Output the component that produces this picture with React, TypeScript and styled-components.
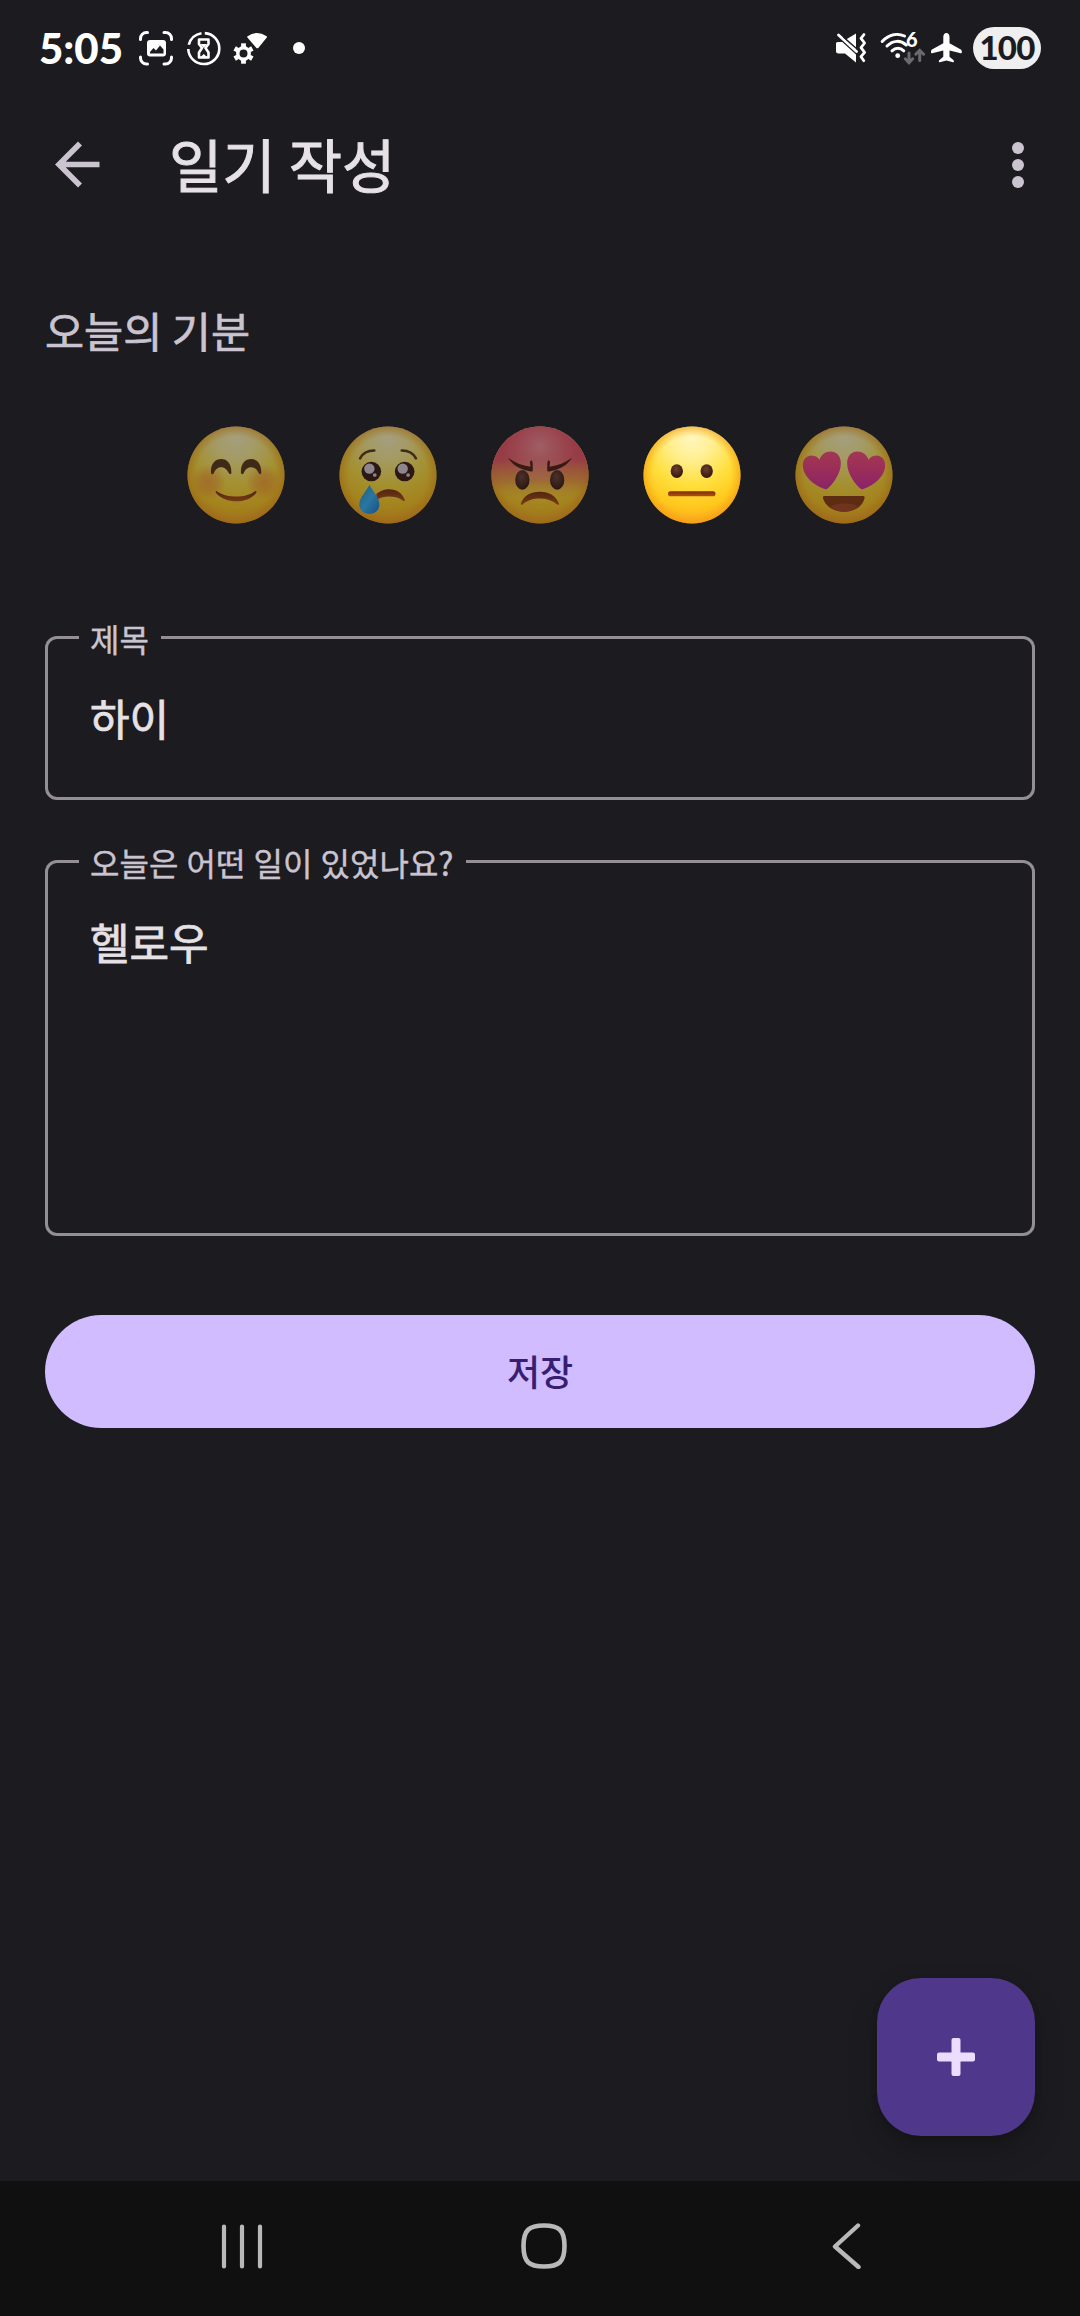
import React from "react";
import styled, { createGlobalStyle } from "styled-components";

const hangul = `"Noto Sans CJK KR", "Noto Sans", sans-serif`;

const GlobalStyle = createGlobalStyle`
  *, *::before, *::after { box-sizing: border-box; }
  body { margin: 0; background: #1c1b1f; font-family: ${hangul}; }
`;

const Screen = styled.div`
  display: flex;
  flex-direction: column;
  width: 1080px;
  height: 2316px;
  overflow: hidden;
  background: #1c1b1f;
  color: #e6e1e5;
`;

const StatusBar = styled.header`
  display: flex;
  justify-content: space-between;
  height: 96px;
  padding: 0 39px 0 39px;
`;

const StatusGroup = styled.div`
  display: flex;
  align-items: center;
`;

const Clock = styled.time`
  width: 99px;
  font: 900 42px/48px Lato, sans-serif;
  letter-spacing: 0;
  color: #fff;
`;

const StatusIcon = styled.svg<{ $gap?: number }>`
  display: block;
  flex: none;
  margin-left: ${(p) => p.$gap ?? 0}px;
  overflow: visible;
`;

const MoreDot = styled.span`
  width: 12px;
  height: 12px;
  margin-left: 26px;
  border-radius: 50%;
  background: #fff;
`;

const WifiBand = styled.text`
  font: 900 20px Lato, sans-serif;
`;

const Battery = styled.span`
  display: flex;
  align-items: center;
  justify-content: center;
  width: 68px;
  height: 42px;
  margin-left: 9px;
  border-radius: 21px;
  background: #efeff0;
  color: #1c1b1f;
  font: 900 33px/40px Lato, sans-serif;
  letter-spacing: -0.8px;
  padding-bottom: 2px;
`;

const AppBar = styled.div`
  display: flex;
  align-items: center;
  height: 138px;
  padding: 0 56px 0 54px;
`;

const IconButton = styled.button`
  display: flex;
  padding: 0;
  border: 0;
  background: none;
  color: #cac4d0;
  cursor: pointer;
`;

const Title = styled.h1`
  flex: 1;
  margin: 0 0 0 67px;
  padding-bottom: 4px;
  font-size: 58px;
  font-weight: 400;
  line-height: 80px;
  -webkit-text-stroke: 1px currentColor;
`;

const Form = styled.main`
  display: flex;
  flex: 1;
  flex-direction: column;
  padding: 66px 45px 45px;
`;

const MoodLabel = styled.h2`
  margin: 0;
  font-size: 42.5px;
  font-weight: 400;
  line-height: 60px;
  color: #cac4d0;
  -webkit-text-stroke: 0.7px currentColor;
`;

const MoodRow = styled.div`
  display: flex;
  justify-content: center;
  gap: 54px;
  margin-top: 66px;
`;

const MoodButton = styled.button<{ $selected: boolean }>`
  width: 98px;
  height: 98px;
  padding: 0;
  border: 0;
  background: none;
  opacity: ${(p) => (p.$selected ? 1 : 0.6)};
  cursor: pointer;

  svg { display: block; }
`;

const Field = styled.fieldset<{ $height: number; $top: number }>`
  height: ${(p) => p.$height}px;
  margin: ${(p) => p.$top}px 0 0;
  padding: 0 43px 0 31px;
  border: 3px solid #938f94;
  border-radius: 12px;
`;

const FieldLabel = styled.legend`
  padding: 2px 12px 0 11px;
  font-size: 32px;
  line-height: 40px;
  word-spacing: 1px;
  color: #cac4d0;
  -webkit-text-stroke: 0.4px currentColor;
`;

const FieldValue = styled.div`
  padding: 29px 11px 0;
  font-size: 43px;
  line-height: 60px;
  -webkit-text-stroke: 0.8px currentColor;
`;

const SaveButton = styled.button`
  height: 113px;
  margin-top: 79px;
  padding: 0 0 4px;
  border: 0;
  border-radius: 57px;
  background: #d0bcff;
  color: #381e72;
  font: 500 36px/60px ${hangul};
  cursor: pointer;
`;

const AddButton = styled.button`
  display: grid;
  place-items: center;
  width: 158px;
  height: 158px;
  margin: auto 0 0 auto;
  padding: 0;
  border: 0;
  border-radius: 44px;
  background: #4f378b;
  box-shadow: 0 14px 30px rgba(0, 0, 0, 0.22), 0 2px 6px rgba(0, 0, 0, 0.16);
  cursor: pointer;
`;

const NavBar = styled.nav`
  display: flex;
  align-items: center;
  height: 135px;
  padding: 0 219px 6px 221px;
  background: #101010;
`;

const NavButton = styled(IconButton)<{ $gap?: number }>`
  margin-left: ${(p) => p.$gap ?? 0}px;
`;

const brown = "#5b3313";

function Face({ id, children, angry }: { id: string; children: React.ReactNode; angry?: boolean }) {
  return (
    <svg width="98" height="98" viewBox="0 0 100 100">
      <defs>
        <radialGradient id={`${id}-base`} cx="50%" cy="12%" r="96%">
          <stop offset="0" stopColor="#fff6bc" />
          <stop offset="0.22" stopColor="#fff094" />
          <stop offset="0.5" stopColor="#ffdf3c" />
          <stop offset="0.74" stopColor="#ffc81c" />
          <stop offset="1" stopColor="#f9961c" />
        </radialGradient>
        <radialGradient id={`${id}-rim`} cx="50%" cy="50%" r="50%">
          <stop offset="0.8" stopColor="#f7a81a" stopOpacity="0" />
          <stop offset="1" stopColor="#f39a14" stopOpacity="0.6" />
        </radialGradient>
        <linearGradient id={`${id}-red`} x1="0" y1="0" x2="0" y2="1">
          <stop offset="0" stopColor="#e8455c" />
          <stop offset="0.34" stopColor="#ea5560" />
          <stop offset="0.56" stopColor="#ee8442" stopOpacity="0.7" />
          <stop offset="0.74" stopColor="#f8b02c" stopOpacity="0" />
        </linearGradient>
        <radialGradient id={`${id}-shine`} cx="50%" cy="20%" r="40%">
          <stop offset="0" stopColor="#ffb8b8" stopOpacity="0.6" />
          <stop offset="1" stopColor="#ff9a9a" stopOpacity="0" />
        </radialGradient>
        <radialGradient id={`${id}-blush`}>
          <stop offset="0" stopColor="#f2602c" stopOpacity="0.42" />
          <stop offset="0.5" stopColor="#f2602c" stopOpacity="0.28" />
          <stop offset="1" stopColor="#f2642c" stopOpacity="0" />
        </radialGradient>
        <linearGradient id={`${id}-heart`} x1="0" y1="0" x2="0" y2="1">
          <stop offset="0" stopColor="#fb4c76" />
          <stop offset="0.5" stopColor="#ee3a80" />
          <stop offset="1" stopColor="#d22a9c" />
        </linearGradient>
        <linearGradient id={`${id}-tear`} x1="0" y1="0" x2="1" y2="1">
          <stop offset="0" stopColor="#1f86c8" />
          <stop offset="0.5" stopColor="#35b4f4" />
          <stop offset="1" stopColor="#1272d4" />
        </linearGradient>
        <linearGradient id={`${id}-mouth`} x1="0" y1="0" x2="0" y2="1">
          <stop offset="0" stopColor="#7a2c08" />
          <stop offset="1" stopColor="#b5500f" />
        </linearGradient>
        <radialGradient id={`${id}-eye`} cx="45%" cy="35%" r="65%">
          <stop offset="0" stopColor="#6b4030" />
          <stop offset="1" stopColor="#35160c" />
        </radialGradient>
      </defs>
      <circle cx="50" cy="50" r="49.5" fill={`url(#${id}-base)`} />
      <circle cx="50" cy="50" r="49.5" fill={`url(#${id}-rim)`} />
      {angry && <circle cx="50" cy="50" r="49.5" fill={`url(#${id}-red)`} />}
      {angry && <circle cx="50" cy="50" r="49.5" fill={`url(#${id}-shine)`} />}
      {children}
    </svg>
  );
}

const Smile = () => (
  <Face id="smile">
    <circle cx="22" cy="57" r="18" fill="url(#smile-blush)" />
    <circle cx="78" cy="57" r="18" fill="url(#smile-blush)" />
    <path d="M24.400 47C24.400 38 29 33.800 35 33.800s10.300 4.700 10.300 13.700c0 2.200-1.900 2.200-2.800.3C41 44.500 38.700 42 34.900 42s-6.100 2.600-7.500 6c-.9 2-3 1.500-3-1z" fill={brown} />
    <path d="M55 47C55 38 59.500 33.800 65.500 33.800s10.300 4.700 10.300 13.700c0 2.200-1.900 2.200-2.800.3C71.500 44.500 69.200 42 65.400 42s-6.100 2.600-7.500 6c-.9 2-2.900 1.500-2.900-1z" fill={brown} />
    <path d="M30.500 66.500c6 4.300 12.500 5.400 20 5.400s13.500-1.500 19-5.400c1.600-.8 1.900 1 .7 2.400-5 5.700-12 8-19.700 8-8.500 0-15.500-2.700-20.200-7.700-1.600-1.800-1.300-3.500.2-2.700z" fill="url(#smile-mouth)" />
  </Face>
);

const Cry = () => (
  <Face id="cry">
    <path d="M21.500 33C24 28 29 25 36 25" fill="none" stroke={brown} strokeWidth="2.600" strokeLinecap="round" />
    <path d="M78.500 33C76 28 71 25 64 25" fill="none" stroke={brown} strokeWidth="2.600" strokeLinecap="round" />
    <circle cx="33" cy="46.500" r="10" fill="#35160c" />
    <circle cx="67" cy="46.500" r="10" fill="#35160c" />
    <circle cx="31" cy="43.500" r="5.300" fill="#dccdd6" />
    <circle cx="65" cy="43.500" r="5.300" fill="#dccdd6" />
    <circle cx="36.500" cy="50" r="1.900" fill="#dccdd6" />
    <circle cx="70.500" cy="50" r="1.900" fill="#dccdd6" />
    <path d="M38 69.500C42 66 46 64.500 51 64.500c8 0 13.500 4 16 10.500.4 1.500-.8 2-2 1C61 73 56 72 51 72c-5 0-8.500 1-12 3z" fill="url(#cry-mouth)" />
    <path d="M31 60c3.500 6.500 10.200 13 10.200 20.200 0 5.600-4.400 9.500-10.200 9.500s-10.300-3.900-10.300-9.500C20.700 73 28 66.500 31 60z" fill="url(#cry-tear)" />
  </Face>
);

const Angry = () => (
  <Face id="angry" angry>
    <ellipse cx="32" cy="55" rx="7.300" ry="10" fill="url(#angry-eye)" />
    <ellipse cx="67.500" cy="55" rx="7.300" ry="10" fill="url(#angry-eye)" />
    <path d="M17.500 32.500C24 37.500 32 40.500 40.200 41.500L39.800 36.500q1.300-2.400 2.600 0L42.700 45q0 1.800-1.800 1.500C31 45 22 40.500 17.500 32.500z" fill="#4a1a10" />
    <path d="M82.500 32.500C76 37.500 68 40.500 59.800 41.500L60.200 36.500q-1.300-2.400-2.600 0L57.300 45q0 1.800 1.800 1.500C69 45 78 40.500 82.500 32.500z" fill="#4a1a10" />
    <path d="M30.500 79C33 71.500 40 67 49.700 67S66.500 71.500 69.300 79c.3 1.500-.8 1.700-2 .8C62.500 76 57 74 49.700 74s-12.500 2-17.200 5.800c-1.200.9-2.300.7-2-.8z" fill="url(#angry-mouth)" />
  </Face>
);

const Neutral = () => (
  <Face id="neutral">
    <ellipse cx="34.500" cy="46" rx="6.300" ry="7" fill="url(#neutral-eye)" />
    <ellipse cx="65" cy="46" rx="6.300" ry="7" fill="url(#neutral-eye)" />
    <rect x="25.500" y="66.500" width="48.500" height="5.300" rx="2.600" fill="url(#neutral-mouth)" />
  </Face>
);

const heart =
  "M30.500 64.300C22 61.500 8.500 53 8 40.500 7.800 33.500 12.500 30 17 30.200c4 .2 6.500 2 8 4.300C26.500 29.500 31 26 36.500 26c6.500 0 10.500 5.500 10.300 12.500C46.500 49 38 60.500 33 64c-.9.7-1.600.6-2.500.3z";

const Love = () => (
  <Face id="love">
    <path d={heart} fill="url(#love-heart)" />
    <path d={heart} fill="url(#love-heart)" transform="matrix(-1 0 0 1 100 0)" />
    <path d="M30 71.500h39.500q1.800 0 1.500 2C69 82 60.500 87.500 50 87.500S31 82 28.500 73.500q-.4-2 1.500-2z" fill="#8a360c" />
    <path d="M36 82.500C40 78 60 78 64.500 82 60 86 55.500 87.500 50 87.500s-10.500-1.600-14-5z" fill="#a8441c" />
  </Face>
);

const moods = [
  { key: "smile", Picture: Smile },
  { key: "cry", Picture: Cry },
  { key: "angry", Picture: Angry },
  { key: "neutral", Picture: Neutral },
  { key: "love", Picture: Love },
];

const CaptureIcon = () => (
  <StatusIcon width="36" height="36" viewBox="0 0 36 36" fill="none" stroke="#fff" strokeWidth="3" strokeLinecap="round">
    <path d="M2.500 9.500V8.500a6 6 0 0 1 6-6h1M26 2.500h1.500a6 6 0 0 1 6 6v1M33.500 27v1a6 6 0 0 1-6 6H26M9.500 34h-1a6 6 0 0 1-6-6v-1" />
    <rect x="9" y="10" width="19" height="16.500" rx="3" fill="#fff" stroke="none" />
    <path d="M12 23.500v-1.500l3.500-4 2.500 2.500 4-5 3.500 4v4z" fill="#1c1b1f" stroke="none" />
  </StatusIcon>
);

const TimerIcon = () => (
  <StatusIcon $gap={12} width="36" height="36" viewBox="0 0 36 36" fill="none" stroke="#fff" strokeWidth="2.600">
    <path d="M18.800 3.100a15.500 15.500 0 1 1-16.500 15.900M2.800 14.800A15.500 15.500 0 0 1 15.500 3.200" />
    <path d="M13 9.500h9.500v4.500l-3 4 3 4.500v5H13v-5l3-4.500-3-4z" strokeLinejoin="round" />
    <path d="M14.500 14h6.500L17.800 18zM14 27.500l3.800-3.500 3.800 3.500z" fill="#fff" stroke="none" />
  </StatusIcon>
);

const GearWifiIcon = () => (
  <StatusIcon $gap={12} width="33" height="36" viewBox="0 0 33 36">
    <g transform="translate(9.500 23.500)" stroke="#fff" fill="none">
      <circle r="5.700" strokeWidth="3.400" />
      {[0, 60, 120, 180, 240, 300].map((a) => (
        <path key={a} d="M0-6.500V-10.200" strokeWidth="4.800" transform={`rotate(${a})`} />
      ))}
    </g>
    <path d="M13.600 6.200Q23 -.400 32.600 6.200q.8.500.2 1.200L24.500 17.700q-1.200 1.200-2.300 0L13.400 7.400q-.6-.7.2-1.200z" fill="#fff" />
  </StatusIcon>
);

const MutedIcon = () => (
  <StatusIcon width="34" height="36" viewBox="0 0 34 36">
    <path d="M12.500 9.200L22 3.500v17z" fill="#fff" />
    <path d="M3.500 12h4.800L22 24.500V32.500L11 23.500H4.500Q2 23.500 2 21v-7.500q0-1.500 1.500-1.500z" fill="#fff" />
    <path d="M4.500 5L22.500 21.500" stroke="#fff" strokeWidth="2.800" strokeLinecap="round" />
    <path d="M9.500 7L23 19" stroke="#1c1b1f" strokeWidth="1.300" />
    <path d="M30 4.500l-3 3.800 3.600 4.700-3.600 4.700 3.600 4.700-3.600 4.300 2.800 4" fill="none" stroke="#fff" strokeWidth="2.800" strokeLinecap="round" strokeLinejoin="round" />
  </StatusIcon>
);

const WifiIcon = () => (
  <StatusIcon $gap={10} width="48" height="36" viewBox="0 0 48 36" fill="none" stroke="#fff" strokeWidth="3" strokeLinecap="round">
    <path d="M4.200 11.500C11.500 4 20 3 26.500 6M9 16c6.200-6 13.500-6 19.300-1M14 20.800c3.600-3.300 8.200-3.300 11.800 0" />
    <circle cx="19.700" cy="25.700" r="2.400" fill="#fff" stroke="none" />
    <WifiBand x="28" y="16.500" fill="#fff" stroke="none">6</WifiBand>
    <path d="M31 23v9.500M27.300 28.800l3.700 3.900 3.700-3.900M41.700 30.500V20.500M37.800 24.200l3.900-3.900 3.900 3.900" stroke="#6b6a6e" />
  </StatusIcon>
);

const PlaneIcon = () => (
  <StatusIcon $gap={4} width="34" height="36" viewBox="0 0 34 36" fill="#fff">
    <path d="M16.400 3c-2 0-3.100 1.900-3.100 4.200v6L2 19.600Q1 20.200 1 21.500v1q0 1 1 .700l11.300-2.700v6.200l-3.800 3.200q-.7.600-.7 1.500t1 .800l6.600-1.700 6.600 1.700q1 .1 1-.8t-.7-1.500l-3.800-3.200v-6.200l11.300 2.700q1 .3 1-.7v-1q0-1.300-1-1.900l-11.300-6.400v-6C19.500 4.900 18.400 3 16.400 3z" />
  </StatusIcon>
);

export default function App() {
  const [mood, setMood] = React.useState("neutral");
  return (
    <Screen>
      <GlobalStyle />
      <StatusBar>
        <StatusGroup>
          <Clock>5:05</Clock>
          <CaptureIcon />
          <TimerIcon />
          <GearWifiIcon />
          <MoreDot />
        </StatusGroup>
        <StatusGroup>
          <MutedIcon />
          <WifiIcon />
          <PlaneIcon />
          <Battery>100</Battery>
        </StatusGroup>
      </StatusBar>
      <AppBar>
        <IconButton>
          <svg width="48" height="48" viewBox="0 0 48 48" fill="none" stroke="currentColor" strokeWidth="5.600">
            <path d="M45.500 23.500H5M26 2.500L5 23.500l21 21" />
          </svg>
        </IconButton>
        <Title>일기 작성</Title>
        <IconButton>
          <svg width="12" height="46" viewBox="0 0 12 46" fill="currentColor">
            <circle cx="6" cy="6" r="6" />
            <circle cx="6" cy="23" r="6" />
            <circle cx="6" cy="40" r="6" />
          </svg>
        </IconButton>
      </AppBar>
      <Form>
        <MoodLabel>오늘의 기분</MoodLabel>
        <MoodRow>
          {moods.map(({ key, Picture }) => (
            <MoodButton key={key} $selected={mood === key} onClick={() => setMood(key)}>
              <Picture />
            </MoodButton>
          ))}
        </MoodRow>
        <Field $height={184} $top={92}>
          <FieldLabel>제목</FieldLabel>
          <FieldValue>하이</FieldValue>
        </Field>
        <Field $height={396} $top={40}>
          <FieldLabel>오늘은 어떤 일이 있었나요?</FieldLabel>
          <FieldValue>헬로우</FieldValue>
        </Field>
        <SaveButton>저장</SaveButton>
        <AddButton>
          <svg width="38" height="38" viewBox="0 0 38 38" fill="#eaddff">
            <rect x="14.500" y="0" width="9" height="38" rx="2" />
            <rect x="0" y="14.500" width="38" height="9" rx="2" />
          </svg>
        </AddButton>
      </Form>
      <NavBar>
        <NavButton>
          <svg width="42" height="46" viewBox="0 0 42 46" stroke="#b9b9b9" strokeWidth="4.200" strokeLinecap="round">
            <path d="M3 3.500v40M21 3.500v40M39 3.500v40" />
          </svg>
        </NavButton>
        <NavButton $gap={258}>
          <svg width="46" height="46" viewBox="0 0 46 46" fill="none" stroke="#b9b9b9" strokeWidth="4.600">
            <path d="M23 2.500C38 2.500 43.500 7 43.500 23S38 43.500 23 43.500 2.500 39 2.500 23 8 2.500 23 2.500z" />
          </svg>
        </NavButton>
        <NavButton $gap={265}>
          <svg width="29" height="46" viewBox="0 0 29 46" fill="none" stroke="#b9b9b9" strokeWidth="4.400" strokeLinecap="round" strokeLinejoin="round">
            <path d="M26 2.500L3 23.500l23.500 20.500" />
          </svg>
        </NavButton>
      </NavBar>
    </Screen>
  );
}
